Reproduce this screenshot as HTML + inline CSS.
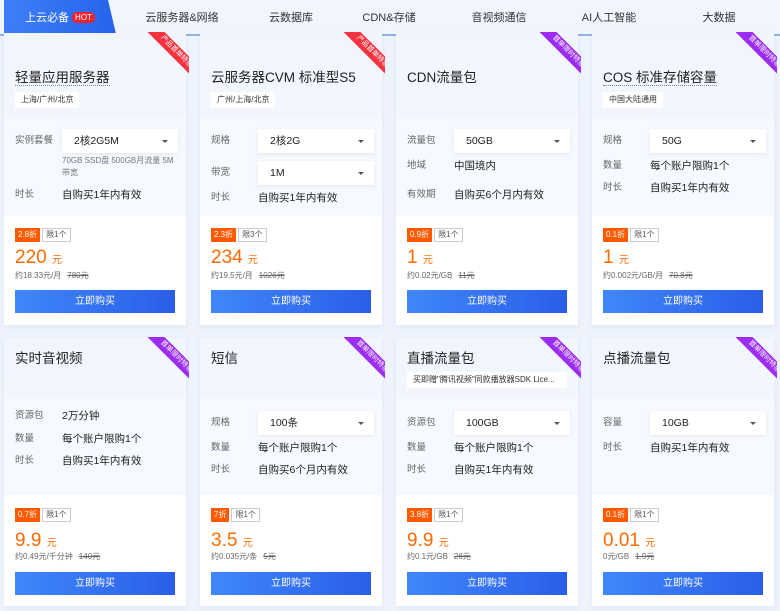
<!DOCTYPE html><html><head><meta charset="utf-8"><style>
*{margin:0;padding:0;box-sizing:border-box}
body{width:780px;height:611px;background:#eef3fc;font-family:"Liberation Sans","Noto Sans CJK SC",sans-serif;color:#222;position:relative;overflow:hidden}
.tabs{position:absolute;left:0;top:0;width:780px;height:36px;border-bottom:2px solid #8fb1f0;background:#f1f5fd}
.tab{position:absolute;top:0;height:34px;line-height:36px;font-size:11px;color:#333;text-align:center}
.act{left:4px;width:112px;background:linear-gradient(90deg,#3f7ef8,#2563eb);color:#fff;clip-path:polygon(0 0,104px 0,112px 34px,0 34px)}
.hot{display:inline-block;background:#f5222d;color:#fff;font-size:8px;line-height:11px;padding:0 3px;border-radius:5px;vertical-align:1px;margin-left:3px}
.card{position:absolute;width:182px;background:#fff;box-shadow:0 2px 6px rgba(80,110,180,.08);overflow:visible}
.hd{position:absolute;left:0;top:0;width:182px;background:linear-gradient(180deg,#f1f5fe,#f3f6fd);}
.pm{position:absolute;left:0;width:182px;background:#f6f9ff}
.tt{position:absolute;left:11px;font-size:13.5px;line-height:20px;color:#222;white-space:nowrap}
.dot{border-bottom:1px dotted #888}
.tag{position:absolute;left:11px;height:16px;line-height:16px;font-size:8px;background:#fff;padding:0 6px;color:#333;white-space:nowrap}
.lb{position:absolute;left:11px;font-size:9.5px;color:#666;line-height:14px}
.vl{position:absolute;left:58px;font-size:10.5px;color:#222;line-height:14px;white-space:nowrap}
.sel{position:absolute;left:58px;width:116px;height:24px;background:#fff;box-shadow:0 1px 4px rgba(0,0,0,.08);font-size:10.5px;line-height:24px;padding-left:12px}
.sel:after{content:"";position:absolute;right:10px;top:11px;border:3px solid transparent;border-top:3px solid #555}
.note{position:absolute;left:58px;font-size:8px;color:#777;line-height:12px;width:118px}
.disc{position:absolute;left:11px;height:14px;line-height:14px;font-size:8px;white-space:nowrap}
.disc b{font-weight:normal;background:#ff5a00;color:#fff;padding:0 3px;display:inline-block}
.disc i{font-style:normal;border:1px solid #ccc;color:#555;padding:0 3px;display:inline-block;line-height:12px;margin-left:2px;background:#fff}
.pr{position:absolute;left:11px;color:#ff6a00;font-size:19px;line-height:22px}
.pr small{font-size:10px}
.sub{position:absolute;left:11px;font-size:8px;color:#666;line-height:12px;white-space:nowrap}
.sub s{color:#666;margin-left:6px}
.btn{position:absolute;left:11px;width:160px;height:23px;background:linear-gradient(90deg,#3f87fb,#2a5ee8);color:#fff;font-size:10px;line-height:23px;text-align:center}
.rw{position:absolute;top:-1px;right:-3px;width:46px;height:46px;overflow:hidden}
.rb{position:absolute;width:70px;height:12px;left:-2px;top:14px;transform:rotate(45deg);font-size:7px;line-height:12px;color:#fff;text-align:center;background:#f5333f}
.pu{background:#9b2cf0}
</style></head><body>
<div class="tabs">
<div class="tab act">上云必备<span class="hot">HOT</span></div>
<div class="tab" style="left:118px;width:128px">云服务器&amp;网络</div>
<div class="tab" style="left:236px;width:110px">云数据库</div>
<div class="tab" style="left:334px;width:110px">CDN&amp;存储</div>
<div class="tab" style="left:444px;width:110px">音视频通信</div>
<div class="tab" style="left:554px;width:110px">AI人工智能</div>
<div class="tab" style="left:664px;width:110px">大数据</div>
</div>

<div class="card" style="left:4px;top:33px;height:292px">
<div class="hd" style="height:85px"></div><div class="pm" style="top:85px;height:98px"></div>
<div class="rw"><div class="rb">产品首单特惠</div></div>
<div class="tt" style="top:35px"><span class="dot">轻量应用服务器</span></div>
<div class="tag" style="top:59px">上海/广州/北京</div>
<div class="lb" style="top:101px">实例套餐</div><div class="sel" style="top:96px">2核2G5M</div>
<div class="note" style="top:122px">70GB SSD盘 500GB月流量 5M带宽</div>
<div class="lb" style="top:155px">时长</div><div class="vl" style="top:155px">自购买1年内有效</div>
<div class="disc" style="top:195px"><b>2.8折</b><i>限1个</i></div>
<div class="pr" style="top:214px">220 <small>元</small></div>
<div class="sub" style="top:237px">约18.33元/月<s>780元</s></div>
<div class="btn" style="top:257px">立即购买</div>
</div>

<div class="card" style="left:200px;top:33px;height:292px">
<div class="hd" style="height:85px"></div><div class="pm" style="top:85px;height:98px"></div>
<div class="rw"><div class="rb">产品首单特惠</div></div>
<div class="tt" style="top:35px">云服务器CVM 标准型S5</div>
<div class="tag" style="top:59px">广州/上海/北京</div>
<div class="lb" style="top:101px">规格</div><div class="sel" style="top:96px">2核2G</div>
<div class="lb" style="top:133px">带宽</div><div class="sel" style="top:128px">1M</div>
<div class="lb" style="top:158px">时长</div><div class="vl" style="top:158px">自购买1年内有效</div>
<div class="disc" style="top:195px"><b>2.3折</b><i>限3个</i></div>
<div class="pr" style="top:214px">234 <small>元</small></div>
<div class="sub" style="top:237px">约19.5元/月<s>1026元</s></div>
<div class="btn" style="top:257px">立即购买</div>
</div>

<div class="card" style="left:396px;top:33px;height:292px">
<div class="hd" style="height:85px"></div><div class="pm" style="top:85px;height:98px"></div>
<div class="rw"><div class="rb pu">首单限时特惠</div></div>
<div class="tt" style="top:35px">CDN流量包</div>
<div class="lb" style="top:101px">流量包</div><div class="sel" style="top:96px">50GB</div>
<div class="lb" style="top:126px">地域</div><div class="vl" style="top:126px">中国境内</div>
<div class="lb" style="top:155px">有效期</div><div class="vl" style="top:155px">自购买6个月内有效</div>
<div class="disc" style="top:195px"><b>0.9折</b><i>限1个</i></div>
<div class="pr" style="top:214px">1 <small>元</small></div>
<div class="sub" style="top:237px">约0.02元/GB<s>11元</s></div>
<div class="btn" style="top:257px">立即购买</div>
</div>

<div class="card" style="left:592px;top:33px;height:292px">
<div class="hd" style="height:85px"></div><div class="pm" style="top:85px;height:98px"></div>
<div class="rw"><div class="rb pu">首单限时特惠</div></div>
<div class="tt" style="top:35px"><span class="dot">COS 标准存储容量</span></div>
<div class="tag" style="top:59px">中国大陆通用</div>
<div class="lb" style="top:101px">规格</div><div class="sel" style="top:96px">50G</div>
<div class="lb" style="top:126px">数量</div><div class="vl" style="top:126px">每个账户限购1个</div>
<div class="lb" style="top:148px">时长</div><div class="vl" style="top:148px">自购买1年内有效</div>
<div class="disc" style="top:195px"><b>0.1折</b><i>限1个</i></div>
<div class="pr" style="top:214px">1 <small>元</small></div>
<div class="sub" style="top:237px">约0.002元/GB/月<s>70.8元</s></div>
<div class="btn" style="top:257px">立即购买</div>
</div>

<div class="card" style="left:4px;top:338px;height:268px">
<div class="hd" style="height:60px"></div><div class="pm" style="top:60px;height:97px"></div>
<div class="rw"><div class="rb pu">首单限时特惠</div></div>
<div class="tt" style="top:11px">实时音视频</div>
<div class="lb" style="top:71px">资源包</div><div class="vl" style="top:71px">2万分钟</div>
<div class="lb" style="top:94px">数量</div><div class="vl" style="top:94px">每个账户限购1个</div>
<div class="lb" style="top:116px">时长</div><div class="vl" style="top:116px">自购买1年内有效</div>
<div class="disc" style="top:170px"><b>0.7折</b><i>限1个</i></div>
<div class="pr" style="top:192px">9.9 <small>元</small></div>
<div class="sub" style="top:213px">约0.49元/千分钟<s>140元</s></div>
<div class="btn" style="top:234px">立即购买</div>
</div>

<div class="card" style="left:200px;top:338px;height:268px">
<div class="hd" style="height:60px"></div><div class="pm" style="top:60px;height:97px"></div>
<div class="rw"><div class="rb pu">首单限时特惠</div></div>
<div class="tt" style="top:11px">短信</div>
<div class="lb" style="top:78px">规格</div><div class="sel" style="top:73px">100条</div>
<div class="lb" style="top:103px">数量</div><div class="vl" style="top:103px">每个账户限购1个</div>
<div class="lb" style="top:125px">时长</div><div class="vl" style="top:125px">自购买6个月内有效</div>
<div class="disc" style="top:170px"><b>7折</b><i>限1个</i></div>
<div class="pr" style="top:192px">3.5 <small>元</small></div>
<div class="sub" style="top:213px">约0.035元/条<s>5元</s></div>
<div class="btn" style="top:234px">立即购买</div>
</div>

<div class="card" style="left:396px;top:338px;height:268px">
<div class="hd" style="height:60px"></div><div class="pm" style="top:60px;height:97px"></div>
<div class="rw"><div class="rb pu">首单限时特惠</div></div>
<div class="tt" style="top:11px">直播流量包</div>
<div class="tag" style="top:34px;width:160px;overflow:hidden">买即赠"腾讯视频"同款播放器SDK Lice...</div>
<div class="lb" style="top:78px">资源包</div><div class="sel" style="top:73px">100GB</div>
<div class="lb" style="top:103px">数量</div><div class="vl" style="top:103px">每个账户限购1个</div>
<div class="lb" style="top:125px">时长</div><div class="vl" style="top:125px">自购买1年内有效</div>
<div class="disc" style="top:170px"><b>3.8折</b><i>限1个</i></div>
<div class="pr" style="top:192px">9.9 <small>元</small></div>
<div class="sub" style="top:213px">约0.1元/GB<s>26元</s></div>
<div class="btn" style="top:234px">立即购买</div>
</div>

<div class="card" style="left:592px;top:338px;height:268px">
<div class="hd" style="height:60px"></div><div class="pm" style="top:60px;height:97px"></div>
<div class="rw"><div class="rb pu">首单限时特惠</div></div>
<div class="tt" style="top:11px">点播流量包</div>
<div class="lb" style="top:78px">容量</div><div class="sel" style="top:73px">10GB</div>
<div class="lb" style="top:103px">时长</div><div class="vl" style="top:103px">自购买1年内有效</div>
<div class="disc" style="top:170px"><b>0.1折</b><i>限1个</i></div>
<div class="pr" style="top:192px">0.01 <small>元</small></div>
<div class="sub" style="top:213px">0元/GB<s>1.9元</s></div>
<div class="btn" style="top:234px">立即购买</div>
</div>
</body></html>
